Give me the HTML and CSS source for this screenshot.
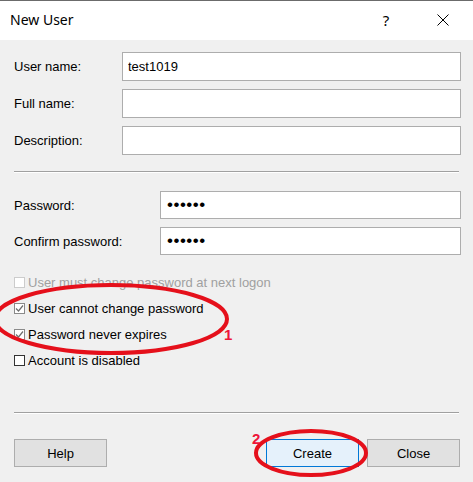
FILE: index.html
```html
<!DOCTYPE html>
<html lang="en">
<head>
    <meta charset="utf-8">
    <title>New User</title>
    <link rel="stylesheet" href="styles.css">
</head>
<body>
<div class="dialog">
    <div class="titlebar">
        <span class="title">New User</span>
        <span class="title-btn help-btn">?</span>
        <span class="title-btn close-btn">
            <svg width="12" height="12" viewBox="0 0 12 12"><path d="M0.5 0.5 L11.5 11.5 M11.5 0.5 L0.5 11.5" stroke="#000" stroke-width="1" fill="none"/></svg>
        </span>
    </div>
    <div class="body">
        <div class="form-group names">
            <label for="userName">User name:</label><input id="userName" class="field" value="test1019">
            <label for="fullName">Full name:</label><input id="fullName" class="field">
            <label for="description">Description:</label><input id="description" class="field">
        </div>
        <div class="separator"></div>
        <div class="form-group passwords">
            <label for="pwd">Password:</label><input id="pwd" class="field secret" type="password" value="123456">
            <label for="pwd2">Confirm password:</label><input id="pwd2" class="field secret" type="password" value="123456">
        </div>
        <div class="checks">
            <div class="check disabled"><span class="box"></span>User must change password at next logon</div>
            <div class="check checked"><span class="box"><svg width="9" height="9" viewBox="0 0 9 9"><path d="M1 4.5 L3.5 7 L8 1.5" stroke="#6e6e6e" stroke-width="1.2" fill="none"/></svg></span>User cannot change password</div>
            <div class="check checked"><span class="box"><svg width="9" height="9" viewBox="0 0 9 9"><path d="M1 4.5 L3.5 7 L8 1.5" stroke="#6e6e6e" stroke-width="1.2" fill="none"/></svg></span>Password never expires</div>
            <div class="check"><span class="box dark"></span>Account is disabled</div>
        </div>
        <div class="separator bottom-sep"></div>
        <div class="buttons">
            <button class="button">Help</button>
            <span class="spacer"></span>
            <button class="button default">Create</button>
            <button class="button">Close</button>
        </div>
    </div>

    <!-- red markup drawn over the dialog -->
    <svg class="marks" width="473" height="482" viewBox="0 0 473 482">
        <ellipse cx="111" cy="319" rx="116" ry="34" stroke="#e5101b" stroke-width="4" fill="none"/>
        <ellipse cx="311" cy="453" rx="55" ry="22" stroke="#e5101b" stroke-width="4" fill="none"/>
    </svg>
    <span class="mark-num num1">1</span>
    <span class="mark-num num2">2</span>
</div>
</body>
</html>
```

FILE: styles.css
```css
html, body {
    margin: 0;
    padding: 0;
    background: #f0f0f0;
}

.dialog {
    position: relative;
    width: 473px;
    height: 482px;
    background: #f0f0f0;
    font-family: "Liberation Sans", Arial, sans-serif;
    font-size: 13px;
    color: #000;
    overflow: hidden;
}

.titlebar {
    display: flex;
    align-items: center;
    height: 39px;
    background: #fff;
    border-top: 1px solid #6b6b6b;
    font-family: "Noto Sans", "Open Sans", sans-serif;
}

.title {
    flex: 1;
    padding-left: 10px;
    font-size: 14px;
    margin-top: -2px;
}

.title-btn {
    display: flex;
    align-items: center;
    justify-content: center;
}

.help-btn {
    width: 12px;
    font-size: 15px;
    margin-right: 45px;
    margin-top: -2px;
}

.close-btn {
    width: 12px;
    margin-right: 24px;
    margin-top: -1px;
}

.body {
    padding: 12px 12px 0 14px;
}

.form-group {
    display: grid;
    row-gap: 8px;
    align-items: center;
}

.names {
    grid-template-columns: 108px 1fr;
}

.passwords {
    grid-template-columns: 146px 1fr;
    margin-top: 18px;
}

label {
    display: inline-block;
}

.field {
    box-sizing: border-box;
    height: 29px;
    width: 100%;
    margin: 0;
    border: 1px solid #adadad;
    background: #fff;
    padding: 0 5px;
    font-family: "Liberation Sans", Arial, sans-serif;
    font-size: 13px;
    color: #000;
    outline: none;
}

.secret {
    height: 28px;
    font-size: 17px;
    letter-spacing: 0.5px;
    padding-left: 6px;
}

.separator {
    margin-top: 16px;
    margin-right: 2px;
    border-top: 1px solid #a0a0a0;
    border-bottom: 1px solid #fff;
}

.checks {
    margin-top: 14px;
}

.check {
    display: flex;
    align-items: center;
    height: 26px;
}

.check.disabled {
    color: #a0a0a0;
}

.box {
    box-sizing: border-box;
    display: inline-flex;
    align-items: center;
    justify-content: center;
    width: 11px;
    height: 11px;
    margin-right: 3px;
    border: 1px solid #8a8a8a;
    background: #fff;
}

.check.disabled .box {
    border-color: #cccccc;
}

.box.dark {
    border-color: #333;
}

.bottom-sep {
    margin-top: 39px;
}

.buttons {
    display: flex;
    margin-top: 25px;
    margin-right: 1px;
    gap: 8px;
}

.spacer {
    flex: 1;
}

.button {
    box-sizing: border-box;
    width: 93px;
    height: 28px;
    margin: 0;
    border: 1px solid #adadad;
    background: #e1e1e1;
    font-family: "Liberation Sans", Arial, sans-serif;
    font-size: 13px;
    color: #000;
    padding: 0;
}

.button.default {
    background: #e5f1fb;
    border-color: #0078d7;
}

.marks {
    position: absolute;
    left: 0;
    top: 0;
    pointer-events: none;
}

.mark-num {
    position: absolute;
    color: #ee1538;
    font-family: "Liberation Sans", Arial, sans-serif;
    font-weight: bold;
    font-size: 15px;
    line-height: 1;
}

.num1 {
    left: 224px;
    top: 327px;
}

.num2 {
    left: 252px;
    top: 431px;
}
```
